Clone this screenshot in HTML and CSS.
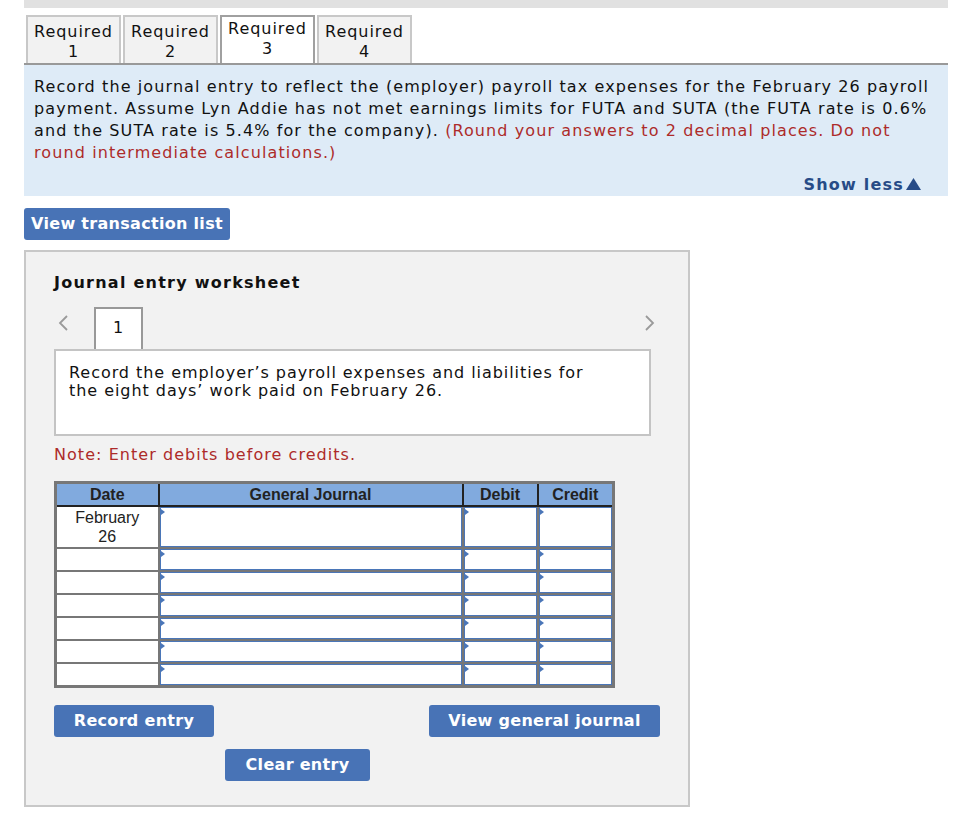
FILE: index.html
```html
<!DOCTYPE html>
<html lang="en">
<head>
<meta charset="utf-8">
<title>Journal entry worksheet</title>
<link rel="stylesheet" href="styles.css">
</head>
<body>
<div class="page">
  <div class="topbar"></div>
  <div class="tabs">
    <div class="tab">Required<br>1</div>
    <div class="tab">Required<br>2</div>
    <div class="tab active">Required<br>3</div>
    <div class="tab">Required<br>4</div>
  </div>
  <div class="prompt">
    <p class="prompt-text">Record the journal entry to reflect the (employer) payroll tax expenses for the February 26 payroll payment. Assume Lyn Addie has not met earnings limits for FUTA and SUTA (the FUTA rate is 0.6% and the SUTA rate is 5.4% for the company). <span class="red">(Round your answers to 2 decimal places. Do not round intermediate calculations.)</span></p>
    <div class="show-less">Show less<svg class="tri" width="15" height="12" viewBox="0 0 15 12"><polygon points="7.5,0 15,12 0,12" fill="#274b87"/></svg></div>
  </div>
  <div class="btn btn-trans">View transaction list</div>

  <div class="panel">
    <div class="panel-title">Journal entry worksheet</div>
    <div class="nav">
      <svg class="chev chev-left" width="14" height="18" viewBox="0 0 14 18"><polyline points="11,2 4,9 11,16" fill="none" stroke="#9a9a9a" stroke-width="1.8"/></svg>
      <div class="entry-tab">1</div>
      <svg class="chev chev-right" width="14" height="18" viewBox="0 0 14 18"><polyline points="3,2 10,9 3,16" fill="none" stroke="#9a9a9a" stroke-width="1.8"/></svg>
    </div>
    <div class="desc">Record the employer’s payroll expenses and liabilities for the eight days’ work paid on February 26.</div>
    <div class="note">Note: Enter debits before credits.</div>

    <table class="journal">
      <colgroup>
        <col class="c-date"><col class="c-gj"><col class="c-dr"><col class="c-cr">
      </colgroup>
      <thead>
        <tr><th>Date</th><th>General Journal</th><th>Debit</th><th>Credit</th></tr>
      </thead>
      <tbody>
        <tr>
          <td class="date">February<br>26</td>
          <td><div class="inp tall"></div></td>
          <td><div class="inp tall"></div></td>
          <td><div class="inp tall"></div></td>
        </tr>
        <tr><td class="date"></td><td><div class="inp"></div></td><td><div class="inp"></div></td><td><div class="inp"></div></td></tr>
        <tr><td class="date"></td><td><div class="inp"></div></td><td><div class="inp"></div></td><td><div class="inp"></div></td></tr>
        <tr><td class="date"></td><td><div class="inp"></div></td><td><div class="inp"></div></td><td><div class="inp"></div></td></tr>
        <tr><td class="date"></td><td><div class="inp"></div></td><td><div class="inp"></div></td><td><div class="inp"></div></td></tr>
        <tr><td class="date"></td><td><div class="inp"></div></td><td><div class="inp"></div></td><td><div class="inp"></div></td></tr>
        <tr><td class="date"></td><td><div class="inp"></div></td><td><div class="inp"></div></td><td><div class="inp"></div></td></tr>
      </tbody>
    </table>

    <div class="actions">
      <div class="btn btn-record">Record entry</div>
      <div class="btn btn-view">View general journal</div>
    </div>
    <div class="actions-2">
      <div class="btn btn-clear">Clear entry</div>
    </div>
  </div>
</div>
</body>
</html>
```

FILE: styles.css
```css
* { box-sizing: border-box; }

body {
  margin: 0;
  background: #ffffff;
  font-family: "DejaVu Sans", Verdana, sans-serif;
  font-size: 16px;
  letter-spacing: 0.95px;
  color: #111;
}

.page {
  margin-left: 24px;
  width: 924px;
}

.topbar {
  height: 8px;
  background: #e1e1e1;
}

.tabs {
  display: flex;
  gap: 2px;
  margin-top: 7px;
  padding-left: 2px;
}

.tab {
  width: 95px;
  height: 48px;
  border: 2px solid #c8c8c8;
  border-bottom: none;
  background: #f2f2f2;
  text-align: center;
  line-height: 20px;
  padding-top: 5px;
  color: #111;
}

.tab.active {
  background: #fff;
  border-color: #a0a0a0;
  padding-top: 2px;
}

.prompt {
  border-top: 2px solid #999;
  background: #deebf7;
  padding: 11px 0 1px 10px;
}

.prompt-text {
  margin: 0;
  width: 902px;
  line-height: 22px;
  letter-spacing: 1.1px;
}

.red { color: #ad2b2a; }

.show-less {
  margin-top: 9px;
  display: flex;
  justify-content: flex-end;
  align-items: center;
  gap: 2px;
  padding-right: 27px;
  height: 22px;
  font-weight: bold;
  font-size: 16px;
  letter-spacing: 1.2px;
  color: #274b87;
}

.show-less .tri { display: block; }

.btn {
  display: inline-block;
  background: #4873b6;
  color: #fff;
  font-weight: bold;
  font-size: 16px;
  letter-spacing: 0.3px;
  height: 32px;
  line-height: 32px;
  border-radius: 3px;
  text-align: center;
  white-space: nowrap;
}

.btn-trans {
  margin-top: 12px;
  width: 206px;
}

.panel {
  margin-top: 10px;
  width: 666px;
  border: 2px solid #c8c8c8;
  background: #f2f2f2;
  padding: 21px 28px 24px 28px;
}

.panel-title {
  font-weight: bold;
  letter-spacing: 1.25px;
  line-height: 20px;
  color: #111;
}

.nav {
  margin-top: 14px;
  display: flex;
  align-items: flex-start;
  height: 42px;
}

.chev { display: block; margin-top: 7px; }
.chev-left { margin-left: 2px; }
.chev-right { margin-left: auto; margin-right: 3px; }

.entry-tab {
  margin-left: 24px;
  width: 49px;
  height: 42px;
  border: 2px solid #999;
  border-bottom: none;
  background: #fff;
  text-align: center;
  line-height: 38px;
  color: #111;
}

.desc {
  width: 597px;
  height: 87px;
  border: 2px solid #c4c4c4;
  background: #fff;
  padding: 13px 40px 0 13px;
  line-height: 18px;
}

.note {
  margin-top: 9px;
  line-height: 20px;
  letter-spacing: 1.05px;
  color: #ad2b2a;
}

.journal {
  margin-top: 16px;
  width: 558px;
  border-collapse: collapse;
  table-layout: fixed;
  border: 3px solid #777;
  font-family: "Liberation Sans", Arial, sans-serif;
  font-size: 16px;
  letter-spacing: 0;
  color: #222;
}

.c-date { width: 103px; }
.c-gj { width: 304px; }
.c-dr { width: 75px; }
.c-cr { width: 76px; }

.journal th {
  background: #81aade;
  font-weight: bold;
  height: 23px;
  padding: 0;
  border-right: 2px solid #222;
  border-bottom: 2px solid #222;
  line-height: 21px;
}

.journal td {
  padding: 0;
  border: 2px solid #777;
  background: #fff;
  vertical-align: top;
}

.journal td.date {
  text-align: center;
  line-height: 19px;
  padding-top: 1px;
}

.inp {
  position: relative;
  height: 21px;
  border: 1px solid #4a76b8;
  background: #fff;
}

.inp.tall { height: 40px; }

.inp::before {
  content: "";
  position: absolute;
  left: 0;
  top: 1px;
  border-left: 4px solid #4a76b8;
  border-top: 3px solid transparent;
  border-bottom: 3px solid transparent;
}

.actions {
  margin-top: 17px;
  display: flex;
  justify-content: space-between;
}

.btn-record { width: 160px; }
.btn-view { width: 231px; }

.actions-2 {
  margin-top: 12px;
  padding-left: 171px;
}

.btn-clear { width: 145px; }
```
